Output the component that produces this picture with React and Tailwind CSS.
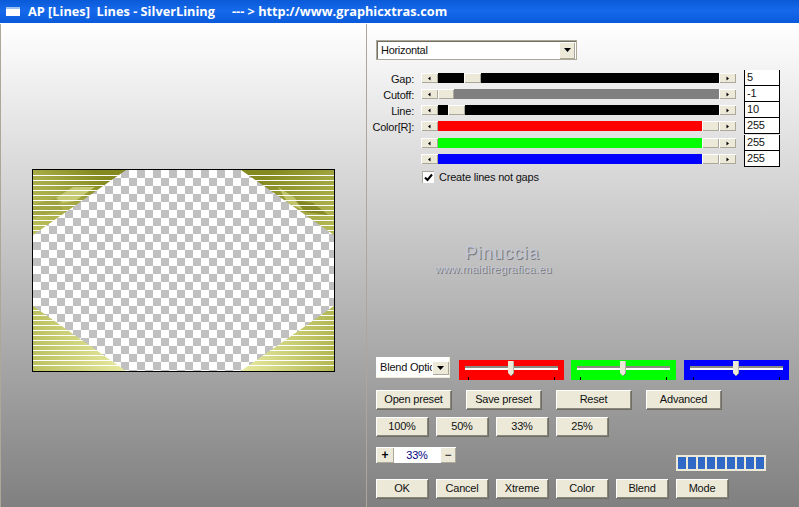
import React from 'react';

const Arrow = ({ dir }) => (
  <svg width="5" height="5" viewBox="0 0 5 5" className="block">
    {dir === 'left' ? <path d="M3.5 0.5v4L1 2.5z" fill="#000" /> : <path d="M1.5 0.5v4L4 2.5z" fill="#000" />}
  </svg>
);

const bevel = 'bg-[#ece9d8] shadow-[inset_1px_1px_0_#fff,inset_-1px_-1px_0_#aca899]';
const uiText = 'text-[11px] tracking-[-0.2px] text-[#111]';

const ScrollRow = ({ label, value, track, thumb, thumbW = 'w-[17px]', rowClass = '' }) => (
  <div className={`flex h-4 items-center ${rowClass}`}>
    <div className={`mt-[2px] flex w-[38px] justify-end whitespace-nowrap leading-none ${uiText}`}>{label}</div>
    <div className="ml-[7px] flex h-[10px] w-[315px]">
      <div className={`flex w-[17px] items-center justify-center ${bevel}`}><Arrow dir="left" /></div>
      <div className={`flex flex-1 ${track}`}>
        <div className={`${thumb} ${thumbW} h-full ${bevel}`} />
      </div>
      <div className={`flex w-[17px] items-center justify-center ${bevel}`}><Arrow dir="right" /></div>
    </div>
    <div className={`ml-2 h-4 w-9 border border-t-0 border-black bg-white pl-[2px] leading-[14px] ${uiText}`}>{value}</div>
  </div>
);

const Btn = ({ w = 'w-[52px]', children }) => (
  <button className={`${w} h-[19px] bg-[#ece9d8] text-center leading-none ${uiText} shadow-[inset_1px_1px_0_#fff,inset_-1px_-1px_0_#8a887a,1px_1px_0_#6f6e64]`}>
    {children}
  </button>
);

const ColorSlider = ({ color }) => (
  <div className={`relative h-5 w-[105px] ${color}`}>
    <div className="absolute left-[6px] top-[6px] h-1 w-[93px] border-t-2 border-[#8a8a80] bg-white" />
    <svg width="6" height="15" viewBox="0 0 6 15" className="absolute left-[49px] top-[1px]">
      <path d="M0 0h6v12l-3 3-3-3z" fill="#ece9d8" />
      <path d="M6 0v12l-3 3" fill="none" stroke="#808080" />
    </svg>
    <div className="absolute bottom-0 left-[9px] h-[3px] w-px bg-black" />
    <div className="absolute bottom-0 left-[95px] h-[3px] w-px bg-black" />
  </div>
);

const Corners = () => (
  <svg width="301" height="201" viewBox="0 0 301 201" className="block">
    <defs>
      <linearGradient id="tl" gradientUnits="userSpaceOnUse" x1="0" y1="65" x2="60" y2="0">
        <stop offset="0" stopColor="#bcc15c" />
        <stop offset="0.55" stopColor="#a5aa46" />
        <stop offset="1" stopColor="#858a20" />
      </linearGradient>
      <linearGradient id="tr" gradientUnits="userSpaceOnUse" x1="301" y1="65" x2="241" y2="0">
        <stop offset="0" stopColor="#b6bb56" />
        <stop offset="0.55" stopColor="#9ea33e" />
        <stop offset="1" stopColor="#858a20" />
      </linearGradient>
      <linearGradient id="bl" gradientUnits="userSpaceOnUse" x1="0" y1="0" x2="93" y2="0">
        <stop offset="0" stopColor="#bcc160" />
        <stop offset="1" stopColor="#e8eaa0" />
      </linearGradient>
      <linearGradient id="br" gradientUnits="userSpaceOnUse" x1="301" y1="0" x2="208" y2="0">
        <stop offset="0" stopColor="#b2b752" />
        <stop offset="1" stopColor="#e8eaa0" />
      </linearGradient>
      <pattern id="lines" width="5" height="5" patternUnits="userSpaceOnUse">
        <rect y="0" width="5" height="1" fill="#fff" />
      </pattern>
    </defs>
    <polygon points="0,0 93,0 0,65" fill="url(#tl)" />
    <polygon points="23,28 40,17 62,17 42,31 30,33" fill="#c6ca74" />
    <polygon points="0,35 23,28 30,40 0,48" fill="#93983a" opacity="0.5" />
    <polygon points="0,1 92,1 0,65" fill="url(#lines)" />
    <polygon points="301,0 208,0 301,65" fill="url(#tr)" />
    <polygon points="245,17 262,28 270,40 255,33" fill="#c0c46c" />
    <polygon points="262,30 280,33 295,45 272,42" fill="#767b16" opacity="0.7" />
    <polygon points="301,1 209,1 301,65" fill="url(#lines)" />
    <polygon points="0,201 93,201 0,136" fill="url(#bl)" />
    <polygon points="0,200 92,200 0,136" fill="url(#lines)" />
    <polygon points="301,201 208,201 301,136" fill="url(#br)" />
    <polygon points="301,200 209,200 301,136" fill="url(#lines)" />
  </svg>
);

const App = () => (
  <div className="flex h-[507px] w-[799px] flex-col overflow-hidden font-['Liberation_Sans',sans-serif]">
    <div className="flex h-[23px] items-center whitespace-pre bg-[linear-gradient(180deg,#0a5ad8_0%,#1569ea_45%,#0a5bdc_100%)] pl-[6px] font-['Open_Sans',sans-serif] text-[12.75px] font-bold text-white">
      <div className="h-[9px] w-[14px] border-t-2 border-[#9cc0f4] bg-white" />
      <span className="ml-2">AP [Lines]  Lines - SilverLining</span>
      <span className="ml-[17px]">--- &gt; http://www.graphicxtras.com</span>
    </div>

    <div className="flex flex-1 border-t border-white bg-[linear-gradient(180deg,#ffffff_0%,#808080_100%)]">
      <div className="flex w-[367px] flex-col border-x border-[#aca899] pl-[31px] pt-[145px]">
        <div className="w-[303px] border border-black">
          <div className="bg-[repeating-conic-gradient(#c0c0c0_0_25%,#ffffff_0_50%)] bg-[length:16px_16px]">
            <Corners />
          </div>
        </div>
      </div>

      <div className="flex flex-1 flex-col pl-[9px] pt-4">
        <div className="flex h-5 w-[201px] items-center border border-[#aca899] bg-white shadow-[inset_1px_1px_0_#716f64]">
          <span className={`flex-1 pl-[4px] ${uiText} tracking-[-0.3px]`}>Horizontal</span>
          <div className={`mr-[1px] flex h-[17px] w-[16px] items-center justify-center ${bevel}`}>
            <svg width="7" height="4" viewBox="0 0 7 4"><path d="M0 0h7L3.500 4z" fill="#000" /></svg>
          </div>
        </div>

        <div className="mt-[10px]">
          <ScrollRow label="Gap:" value="5" track="bg-black" thumb="ml-[26px]" />
          <ScrollRow label="Cutoff:" value="-1" track="bg-[#808080]" thumb="ml-0" thumbW="w-4" />
          <ScrollRow label="Line:" value="10" track="bg-black" thumb="ml-[10px]" />
          <ScrollRow label="Color[R]:" value="255" track="bg-[#ff0000]" thumb="ml-[264px]" />
          <ScrollRow label="" value="255" track="bg-[#00ff00]" thumb="ml-[264px]" rowClass="mt-px" />
          <ScrollRow label="" value="255" track="bg-[#0000ff]" thumb="ml-[264px]" />
        </div>

        <div className="ml-[46px] mt-1 flex items-center">
          <div className="flex h-3 w-3 items-center justify-center bg-white shadow-[inset_1px_1px_0_#aca899]">
            <svg width="9" height="9" viewBox="0 0 9 9"><path d="M1 4.500 3.500 7 8 1.500" fill="none" stroke="#000" strokeWidth="2" /></svg>
          </div>
          <span className={`ml-[5px] leading-none ${uiText}`}>Create lines not gaps</span>
        </div>

        <div className="ml-[59px] mt-[60px] flex w-[120px] flex-col text-[#c2c6d6] [text-shadow:1px_1px_0_#777]">
          <span className="ml-[30px] text-[18px] leading-5 tracking-[0.8px]">Pinuccia</span>
          <span className="whitespace-nowrap text-[11px] leading-[13px] tracking-[0.3px]">www.maidiregrafica.eu</span>
        </div>

        <div className="mt-[81px] flex items-start">
          <div className="flex h-[21px] w-[74px] items-center bg-white shadow-[inset_-1px_-1px_0_#ece9d8]">
            <span className={`w-[56px] overflow-hidden whitespace-nowrap pl-[4px] ${uiText}`}>Blend Options</span>
            <div className={`flex h-[14px] w-[17px] items-center justify-center ${bevel}`}>
              <svg width="7" height="4" viewBox="0 0 7 4"><path d="M0 0h7L3.500 4z" fill="#000" /></svg>
            </div>
          </div>
          <div className="ml-[9px] mt-[3px] flex gap-[7px]">
            <ColorSlider color="bg-[#ff0000]" />
            <ColorSlider color="bg-[#00ff00]" />
            <div className="ml-[1px]"><ColorSlider color="bg-[#0000ff]" /></div>
          </div>
        </div>

        <div className="mt-[10px] flex gap-[15px]">
          <Btn w="w-[75px]">Open preset</Btn>
          <Btn w="w-[75px]">Save preset</Btn>
          <Btn w="w-[75px]">Reset</Btn>
          <Btn w="w-[75px]">Advanced</Btn>
        </div>

        <div className="mt-2 flex gap-2">
          <Btn>100%</Btn>
          <Btn>50%</Btn>
          <Btn>33%</Btn>
          <Btn>25%</Btn>
        </div>

        <div className="mt-[11px] flex items-start">
          <div className={`flex h-4 w-[18px] items-center justify-center text-[12px] font-bold leading-none text-black ${bevel}`}>+</div>
          <div className="flex h-4 w-[46px] items-center justify-center bg-white text-[11px] leading-none tracking-[-0.2px] text-[#000080]">33%</div>
          <div className={`flex h-4 w-4 items-center justify-center text-[12px] leading-none text-black ${bevel}`}>−</div>
          <div className="ml-[220px] mt-2 flex h-4 w-[90px] gap-[2px] border-2 border-[#ece9d8] bg-[#ece9d8]">
            {Array.from({ length: 9 }).map((_, i) => (
              <div key={i} className="h-full flex-1 bg-[#3169c6]" />
            ))}
          </div>
        </div>

        <div className="mt-2 flex gap-2">
          <Btn>OK</Btn>
          <Btn>Cancel</Btn>
          <Btn>Xtreme</Btn>
          <Btn>Color</Btn>
          <Btn>Blend</Btn>
          <Btn>Mode</Btn>
        </div>
      </div>
    </div>
  </div>
);

export default App;
